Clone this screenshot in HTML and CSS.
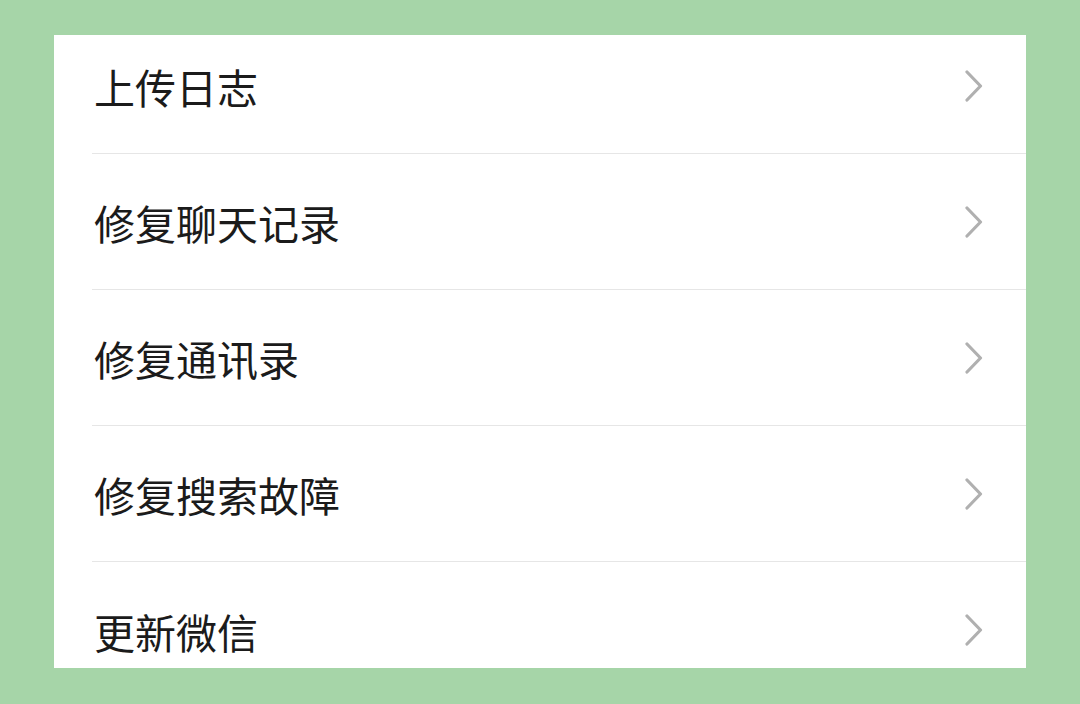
FILE: index.html
```html
<!DOCTYPE html>
<html lang="zh-CN">
<head>
<meta charset="utf-8">
<link rel="stylesheet" href="styles.css">
</head>
<body>
<div class="card">
  <ul class="list">
    <li class="row"><div class="inner"><span class="label">上传日志</span><svg class="chev" viewBox="0 0 18 32" width="18" height="32"><path d="M2 2 L15.5 16 L2 30" fill="none" stroke="#b0b0b0" stroke-width="3.2" stroke-linecap="round" stroke-linejoin="round"/></svg></div></li>
    <li class="row"><div class="inner"><span class="label">修复聊天记录</span><svg class="chev" viewBox="0 0 18 32" width="18" height="32"><path d="M2 2 L15.5 16 L2 30" fill="none" stroke="#b0b0b0" stroke-width="3.2" stroke-linecap="round" stroke-linejoin="round"/></svg></div></li>
    <li class="row"><div class="inner"><span class="label">修复通讯录</span><svg class="chev" viewBox="0 0 18 32" width="18" height="32"><path d="M2 2 L15.5 16 L2 30" fill="none" stroke="#b0b0b0" stroke-width="3.2" stroke-linecap="round" stroke-linejoin="round"/></svg></div></li>
    <li class="row"><div class="inner"><span class="label">修复搜索故障</span><svg class="chev" viewBox="0 0 18 32" width="18" height="32"><path d="M2 2 L15.5 16 L2 30" fill="none" stroke="#b0b0b0" stroke-width="3.2" stroke-linecap="round" stroke-linejoin="round"/></svg></div></li>
    <li class="row last"><div class="inner"><span class="label">更新微信</span><svg class="chev" viewBox="0 0 18 32" width="18" height="32"><path d="M2 2 L15.5 16 L2 30" fill="none" stroke="#b0b0b0" stroke-width="3.2" stroke-linecap="round" stroke-linejoin="round"/></svg></div></li>
  </ul>
</div>
</body>
</html>
```
FILE: styles.css
```css
html, body {
  margin: 0;
  padding: 0;
}
body {
  background: #a6d5a8;
  width: 1080px;
  height: 704px;
  padding: 35px 54px 0;
  box-sizing: border-box;
  font-family: "Noto Sans CJK SC", "Noto Sans", sans-serif;
  overflow: hidden;
}
.card {
  background: #ffffff;
  height: 633px;
  overflow: hidden;
}
.list {
  list-style: none;
  margin: -17px 0 0;
  padding: 0;
}
.row {
  padding-left: 38px;
  height: 136px;
  box-sizing: border-box;
}
.inner {
  height: 136px;
  box-sizing: border-box;
  border-bottom: 1px solid #e6e6e6;
  display: flex;
  align-items: center;
  justify-content: space-between;
  padding-left: 2px;
  padding-right: 43px;
}
.row.last .inner {
  border-bottom: none;
}
.label {
  font-size: 41px;
  color: #1b1b1b;
  line-height: 1;
  position: relative;
  top: 1px;
}
.chev {
  display: block;
}
```
